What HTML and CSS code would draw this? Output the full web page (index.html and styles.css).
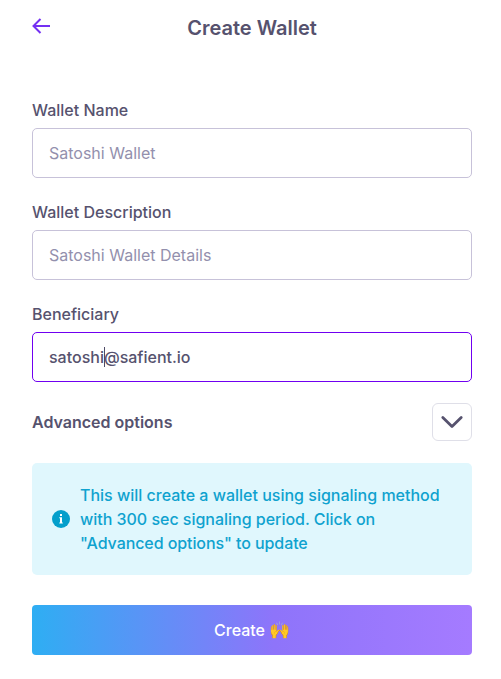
FILE: index.html
```
<!DOCTYPE html>
<html lang="en">
<head>
<meta charset="utf-8">
<title>Create Wallet</title>
<link rel="stylesheet" href="styles.css">
</head>
<body>
<main class="page">
  <header class="header">
    <svg class="back" viewBox="0 0 20 18" width="20" height="18"><path d="M18 9H1.5M8.5 2L1.5 9L8.5 16"/></svg>
    <h1>Create Wallet</h1>
  </header>
  <form class="form">
    <div class="field"><span class="label">Wallet Name</span><div class="input placeholder">Satoshi Wallet</div></div>
    <div class="field"><span class="label">Wallet Description</span><div class="input placeholder">Satoshi Wallet Details</div></div>
    <div class="field"><span class="label">Beneficiary</span><div class="input focused">satoshi<span class="caret"></span>@safient.io</div></div>
    <div class="advanced"><span class="advanced-label">Advanced options</span><div class="toggle"><svg viewBox="0 0 24 14" width="24" height="14"><path d="M2.8 2.5L12 11.5L21.2 2.5"/></svg></div></div>
    <div class="notice">
      <svg class="info" viewBox="0 0 18 18" width="18" height="18"><circle cx="9" cy="9" r="9"/><path d="M8 4h2v2H8zM7.3 7.3H10v5.2h.8v1H7.3v-1H8V8.3h-.7z"/></svg>
      <p>This will create a wallet using signaling method <span class="notice-line">with 300 sec signaling period. Click on</span> <span class="notice-end">"Advanced options" to update</span></p>
    </div>
    <div class="create">Create <span class="hands">🙌</span></div>
  </form>
</main>
</body>
</html>
```
FILE: styles.css
```
* { box-sizing: border-box; }
body { margin: 0; background: #fff; color: #56526e; font: 500 16px/24px Inter, sans-serif; }
.page { width: 440px; margin: 0 0 0 32px; padding-top: 12px; }
.header { display: grid; grid-template-columns: 20px 1fr 20px; height: 86px; }
.back { margin-top: 5px; fill: none; stroke: #7430f2; stroke-width: 2; }
h1 { margin: 0; text-align: center; font-size: 20px; line-height: 32px; font-weight: 600; }
.field { height: 102px; }
.label { display: block; height: 30px; }
.input { display: flex; align-items: center; height: 50px; padding: 0 16px; border: 1px solid #c7c2d9; border-radius: 5px; }
.placeholder { color: #9390ad; font-weight: 400; }
.focused { border-color: #7000f0; }
.caret { width: 1px; height: 20px; margin-right: -1px; background: #4e4b66; }
.advanced { display: flex; align-items: center; justify-content: space-between; height: 38px; margin-top: -1px; }
.advanced-label { font-weight: 600; }
.toggle { display: grid; place-items: center; width: 40px; height: 38px; border: 1px solid #dfdfe8; border-radius: 6px; }
.toggle path { fill: none; stroke: #56526e; stroke-width: 2.8; stroke-linecap: round; stroke-linejoin: round; }
.notice { display: flex; align-items: center; gap: 10px; height: 112px; margin-top: 22px; padding: 0 20px; background: #e0f7fd; color: #0fa2cf; border-radius: 5px; }
.notice p { margin: 0; width: 365px; }
.notice-line { letter-spacing: -0.02px; }
.notice-end { letter-spacing: -0.08px; }
.info { flex: none; fill: #049fcb; }
.info path { fill: #fff; }
.create { display: flex; align-items: center; justify-content: center; gap: 4px; height: 50px; margin-top: 30px; color: #fff; border-radius: 4px; background: linear-gradient(90deg, #2eaef3, #8e74fa 55%, #a57bff); }
.hands { font-size: 17px; }
```
